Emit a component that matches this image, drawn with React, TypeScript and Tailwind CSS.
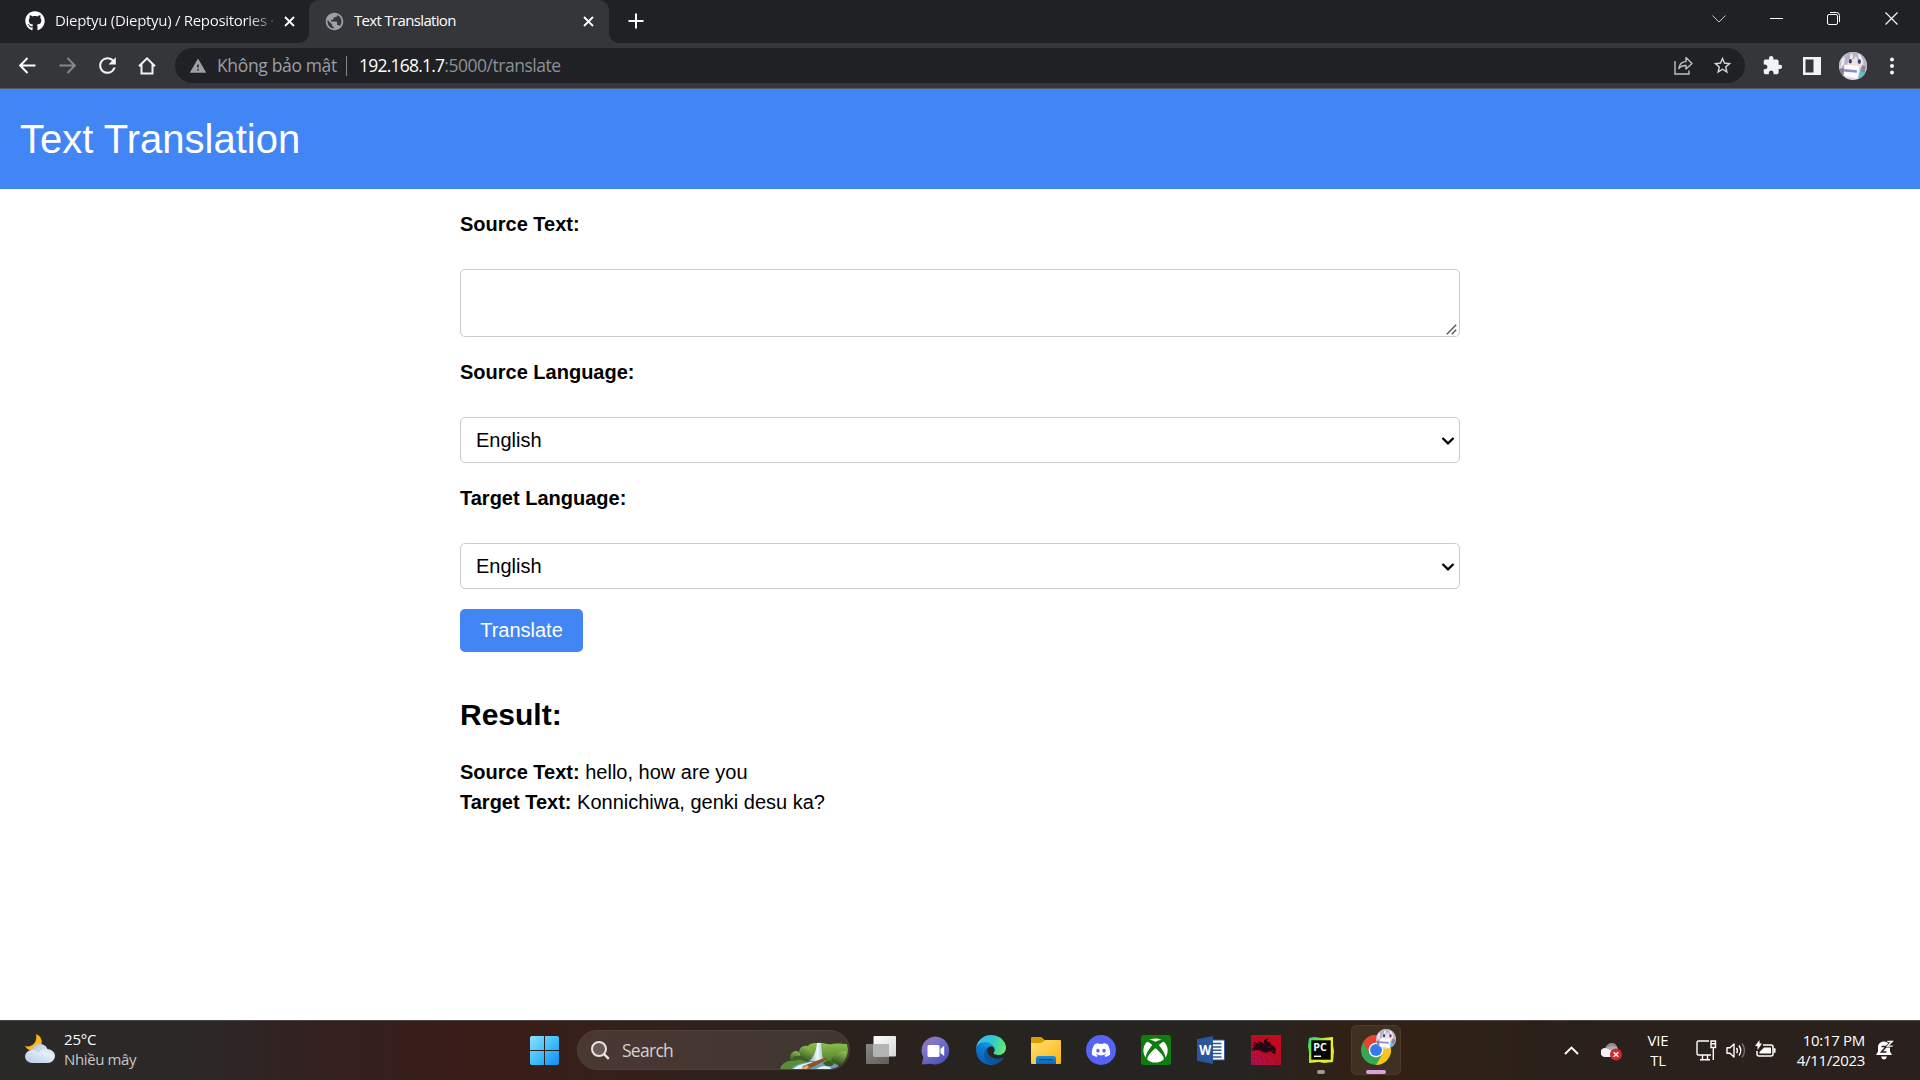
import type { ReactNode } from 'react';
import { FaDiscord, FaGithub, FaXbox } from 'react-icons/fa';
import { MdExtension, MdPublic, MdRefresh, MdStarBorder, MdWarning } from 'react-icons/md';

/* ---------- browser chrome ---------- */

function CloseX({ className = '' }: { className?: string }) {
  return (
    <svg className={`block size-[11px] shrink-0 ${className}`} viewBox="0 0 11 11" fill="none" stroke="#fff" strokeWidth="1.8">
      <path d="M1 1l9 9M10 1l-9 9" />
    </svg>
  );
}

function TabStrip() {
  return (
    <div className="flex h-[43px] bg-[#202124]">
      <div className="flex w-[309px] items-center pb-px pl-[25px]">
        <FaGithub className="size-[20px] shrink-0 text-white" />
        <div className="ml-[10px] w-[220px] whitespace-nowrap bg-gradient-to-r from-white from-88% to-[#4a4b4e] bg-clip-text pb-[3px] text-[15px] leading-[20px] tracking-[-0.3px] text-transparent">
          Dieptyu (Dieptyu) / Repositories ·
        </div>
        <CloseX className="ml-[9px]" />
      </div>
      <div className="relative flex w-[300px] items-center rounded-t-[10px] bg-[#35363a] pb-px pl-[15px]">
        <svg className="absolute -left-[10px] bottom-0 size-[10px]" viewBox="0 0 10 10">
          <path d="M10 0v10H0A10 10 0 0 0 10 0z" fill="#35363a" />
        </svg>
        <svg className="absolute -right-[10px] bottom-0 size-[10px]" viewBox="0 0 10 10">
          <path d="M0 0v10h10A10 10 0 0 1 0 0z" fill="#35363a" />
        </svg>
        <MdPublic className="size-[21px] shrink-0 text-[#9aa0a6]" />
        <div className="ml-[9px] w-[219px] whitespace-nowrap pb-[3px] text-[15px] leading-[20px] tracking-[-0.66px] text-white">
          Text Translation
        </div>
        <CloseX className="ml-[10px]" />
      </div>
      <div className="flex flex-1 items-center pb-px pl-[19px]">
        <svg className="block size-[16px]" viewBox="0 0 16 16" stroke="#fff" strokeWidth="2">
          <path d="M8 0.5v15M0.5 8h15" />
        </svg>
      </div>
      <div className="flex items-start pr-[22px] pt-[12px]">
        <svg className="mt-[3px] block h-[8px] w-[14px]" viewBox="0 0 14 8" fill="none" stroke="#c8c9cb" strokeWidth="1">
          <path d="M.5.5L7 7 13.5.5" />
        </svg>
        <svg className="ml-[44px] mt-[6px] block h-[1px] w-[13px]" viewBox="0 0 13 1">
          <path d="M0 0h13v1H0z" fill="#fff" />
        </svg>
        <svg className="ml-[44px] block size-[13px]" viewBox="0 0 13 13" fill="none" stroke="#fff" strokeWidth="1">
          <rect x=".5" y="2.5" width="10" height="10" rx="1.5" />
          <path d="M3 .5h6.5a3 3 0 0 1 3 3V10" />
        </svg>
        <svg className="ml-[45px] block size-[13px]" viewBox="0 0 13 13" fill="none" stroke="#fff" strokeWidth="1.1">
          <path d="M.5.5l12 12M12.5.5l-12 12" />
        </svg>
      </div>
    </div>
  );
}

function Arrow({ color, className = '' }: { color: string; className?: string }) {
  return (
    <svg className={`block size-[17px] ${className}`} viewBox="0 0 17 17" fill="none" stroke={color} strokeWidth="1.9">
      <path d="M16.5 8.5H1.5M8.5 1L1.2 8.5l7.3 7.5" />
    </svg>
  );
}

function Toolbar() {
  return (
    <div className="flex h-[46px] items-center border-b border-[#55585c] bg-[#35363a] pl-[19px] pr-[25px]">
      <Arrow color="#fff" />
      <Arrow color="#85878a" className="ml-[23px] rotate-180" />
      <MdRefresh className="ml-[19px] size-[25px] text-[#f1f3f4]" />
      <svg className="ml-[18px] block h-[18px] w-[18px]" viewBox="0 0 18 18" fill="none" stroke="#f1f3f4" strokeWidth="2">
        <path d="M1 9.2L9 1.4l8 7.8M3.5 7.5V16.5h11V7.5" />
      </svg>
      <div className="ml-[19px] flex h-[35px] flex-1 items-center rounded-full bg-[#202124] pl-[14px] pr-[12px] text-[17.5px] leading-[24px]">
        <MdWarning className="size-[18px] text-[#9aa0a6]" />
        <span className="ml-[10px] w-[129px] whitespace-nowrap pb-px tracking-[-0.35px] text-[#9aa0a6]">Không bảo mật</span>
        <span className="h-[20px] w-px bg-[#85898e]" />
        <span className="ml-[12px] whitespace-nowrap pb-px tracking-[-0.78px] text-white">192.168.1.7</span>
        <span className="flex-1 whitespace-nowrap pb-px tracking-[-0.47px] text-[#8d9196]">:5000/translate</span>
        <svg className="block size-[19px]" viewBox="0 0 19 19" fill="none" stroke="#bdc1c6" strokeWidth="1.4">
          <path d="M1 5v13h14v-3.5" />
          <path d="M4.8 12.6c.5-4.300 2.900-6.800 7.200-7V1.600L18 7.400l-6 5.600V9.500c-3.300-.1-5.500.9-7.200 3.100z" strokeLinejoin="round" />
        </svg>
        <MdStarBorder className="ml-[19px] size-[21px] text-[#d5d7da]" />
      </div>
      <MdExtension className="ml-[17px] size-[21px] text-[#f1f3f4]" />
      <svg className="ml-[20px] block size-[18px]" viewBox="0 0 18 18">
        <path d="M0 0h18v18H0zM2.500 2.500v13h8v-13z" fill="#f1f3f4" fillRule="evenodd" />
      </svg>
      <Avatar className="ml-[18px] size-[28px]" />
      <svg className="ml-[22px] block h-[18px] w-[6px]" viewBox="0 0 6 18" fill="#f1f3f4">
        <circle cx="3" cy="2.500" r="2" />
        <circle cx="3" cy="9" r="2" />
        <circle cx="3" cy="15.500" r="2" />
      </svg>
    </div>
  );
}

function Avatar({ className = '' }: { className?: string }) {
  return (
    <svg className={`block shrink-0 rounded-full ${className}`} viewBox="0 0 28 28">
      <rect width="28" height="28" fill="#dcd8e4" />
      <path d="M7 5l6-3h8l4 4-2 9H8z" fill="#f3dfdc" />
      <path d="M8 0h15l4 6 1 9-4 1 .5-7-2.500-4-3 3.500L17 4l-3 4-1.500-3L9 8.500 8 15l-6 6-2-9z" fill="#b9b3c6" />
      <path d="M13 1l1 4-3 3 .5-5zM19 1l3 3 1 5-3.500-3z" fill="#f4f2f8" />
      <path d="M3 7l3-2-1 7-4 5z" fill="#eeebf3" />
      <ellipse cx="11.300" cy="9.300" rx="1.600" ry="2.300" fill="#2c4488" />
      <ellipse cx="20.300" cy="9.600" rx="1.600" ry="2.300" fill="#2c4488" />
      <path d="M0 17l5-1 1 9-3 3H0z" fill="#8b7b92" />
      <path d="M19 26l3-11 4 2 2 6-5 5z" fill="#63bfcd" />
      <path d="M23 13l4 2-2 6-3-2z" fill="#9a7f95" />
      <path d="M5.500 12.500l14.500 1.800-1 12.200-14.500-2.500z" fill="#fdfdff" />
      <path d="M5.500 17l12.500 1.200-.2 2.600L4 19.600z" fill="#8f8ccc" />
    </svg>
  );
}

/* ---------- page ---------- */

function SelectBox({ value }: { value: string }) {
  return (
    <div className="mt-[30px] flex h-[46px] items-center justify-between rounded-[5px] border border-[#ccc] pl-[15px] pr-[4px] text-[20px] leading-[30px]">
      <span>{value}</span>
      <svg className="mt-px block h-[10px] w-[14px]" viewBox="0 0 14 10" fill="none" stroke="#000" strokeWidth="2.200">
        <path d="M1.500 2L7 7.400 12.500 2" />
      </svg>
    </div>
  );
}

function Label({ children }: { children: ReactNode }) {
  return <div className="mt-[20px] text-[20px] font-bold leading-[30px]">{children}</div>;
}

function Page() {
  return (
    <div className="flex-1 bg-white font-['Liberation_Sans',Arial,sans-serif] text-black">
      <header className="flex h-[100px] items-center bg-[#4285f4] pl-[20px] text-[40px] leading-[60px] text-white">
        Text Translation
      </header>
      <main className="mx-auto w-[1000px]">
        <Label>Source Text:</Label>
        <div className="mt-[30px] flex h-[68px] items-end justify-end rounded-[5px] border border-[#ccc] pb-px pr-[2px]">
          <svg className="block size-[11px]" viewBox="0 0 11 11" stroke="#555" strokeWidth="1.400">
            <path d="M.8 10.200L10.200.8M5.800 10.200l4.400-4.400" />
          </svg>
        </div>
        <Label>Source Language:</Label>
        <SelectBox value="English" />
        <Label>Target Language:</Label>
        <SelectBox value="English" />
        <button className="mt-[20px] flex h-[43px] w-[123px] items-center justify-center rounded-[5px] bg-[#4285f4] pb-[2px] text-[20px] text-white">
          Translate
        </button>
        <h2 className="mt-[40px] text-[30px] font-bold leading-[45px]">Result:</h2>
        <p className="mt-[20px] text-[20px] leading-[30px]">
          <b>Source Text:</b> hello, how are you
          <br />
          <b>Target Text:</b> Konnichiwa, genki desu ka?
        </p>
      </main>
    </div>
  );
}

/* ---------- taskbar ---------- */

function Weather() {
  return (
    <svg className="block h-[30px] w-[32px]" viewBox="0 0 32 30">
      <defs>
        <linearGradient id="cloud" x1="0" y1="0" x2="1" y2="1">
          <stop offset="0" stopColor="#a9c4ee" />
          <stop offset="1" stopColor="#eef4fc" />
        </linearGradient>
        <linearGradient id="cloudLow" x1="0" y1="1" x2="1" y2="0">
          <stop offset="0" stopColor="#b4c8e8" />
          <stop offset=".7" stopColor="#e6effa" />
          <stop offset="1" stopColor="#c5d6f0" />
        </linearGradient>
      </defs>
      <path d="M12 0c5 2 7 7 5 12-2 6-12 7-16 0 6 2 13-3 11-12z" fill="#fdb813" />
      <circle cx="16" cy="18" r="8" fill="url(#cloud)" />
      <path d="M8 29a7 6.500 0 0 1 0-13c4 0 5 1.500 6.500 3 2-3 5-4 8-4a8 7 0 0 1 1 14z" fill="url(#cloudLow)" />
    </svg>
  );
}

function WindowsLogo() {
  return (
    <svg className="block size-[29px]" viewBox="0 0 29 29">
      <defs>
        <linearGradient id="win" x1="0" y1="0" x2="29" y2="29" gradientUnits="userSpaceOnUse">
          <stop offset="0" stopColor="#8ce0ff" />
          <stop offset=".5" stopColor="#41c0fc" />
          <stop offset="1" stopColor="#0f8df5" />
        </linearGradient>
      </defs>
      <path d="M1.200 0H14v14H0V1.200zM15 0h12.800L29 1.200V14H15zM0 15h14v14H1.200L0 27.800zM15 15h14v12.800L27.800 29H15z" fill="url(#win)" />
    </svg>
  );
}

function Landscape() {
  return (
    <svg className="block h-[27px] w-[68px]" viewBox="0 0 68 27">
      <defs>
        <linearGradient id="hill" x1="0" y1="0" x2="0" y2="1">
          <stop offset="0" stopColor="#8dbf4c" />
          <stop offset="1" stopColor="#44752b" />
        </linearGradient>
        <linearGradient id="bush" x1=".8" y1="0" x2=".4" y2="1">
          <stop offset="0" stopColor="#93c153" />
          <stop offset="1" stopColor="#2c4f1e" />
        </linearGradient>
        <linearGradient id="fall" x1="0" y1="0" x2="1" y2="0">
          <stop offset="0" stopColor="#7fa9bd" />
          <stop offset=".5" stopColor="#f0f9fc" />
          <stop offset="1" stopColor="#7fa9bd" />
        </linearGradient>
      </defs>
      <path d="M19 10c1-5 4-7 9-6 2-3 6-3 9-3 6-1 10 2 15 1 6-1 11 0 15 0l1 4v8L58 23H20z" fill="url(#hill)" />
      <path d="M19 17c-1-8 3-12 7-12 5 0 9 5 7 12-3 4-10 4-14 0z" fill="url(#bush)" />
      <path d="M10 19c-1-6 2-10 6-10 3 0 5 4 5 8-1 4-7 6-11 2z" fill="url(#bush)" />
      <path d="M13 18c-1-3 2-5 6-4 4-1 5 2 4 4-3 2-7 2-10 0z" fill="#39632a" />
      <path d="M66 9c-7 0-13 4-15 9 3 4 8 5 11 4 3-3 5-8 4-13z" fill="url(#bush)" />
      <path d="M37 1h4l1.500 14 3.500 4H29c5-4 7-10 8-18z" fill="url(#fall)" />
      <path d="M0 27c2-6 7-9 14-8 5-2 10-1 13 1l-5 7z" fill="#5d8c38" />
      <path d="M11 27c6-6 14-7 24-8 10-1 17 1 24 5l-4 3z" fill="#6c9fb0" />
      <path d="M14 26c5-4 11-4 16-6l5 .5-9 4.500-5 2h-8zM40 25c5-2 9-1 12 2H36z" fill="#dceff5" />
      <path d="M23 24l8-3 13-5 4 1-13 7-7 3h-6z" fill="#8f532a" />
      <path d="M22 25.500l5-2.500 2 2-2 2h-5z" fill="#dca874" />
      <path d="M43 21c4-3 8-2 11 0l-2 3h-6z" fill="#3c5a25" />
    </svg>
  );
}

function TaskView() {
  return (
    <svg className="block h-[28px] w-[30px]" viewBox="0 0 30 28">
      <defs>
        <linearGradient id="tvBack" x1="0" y1="0" x2="1" y2="1">
          <stop offset="0" stopColor="#fff" />
          <stop offset="1" stopColor="#d6d6d6" />
        </linearGradient>
        <linearGradient id="tvFront" x1="0" y1="0" x2="1" y2="1">
          <stop offset="0" stopColor="#888" />
          <stop offset="1" stopColor="#5c5c5c" />
        </linearGradient>
      </defs>
      <rect x="0" y="8" width="23" height="20" rx="1" fill="url(#tvFront)" />
      <rect x="7.500" y="0" width="22.500" height="20.500" rx="1" fill="url(#tvBack)" />
      <path d="M7.500 8H23v12.500H7.500z" fill="#b4b4b4" />
    </svg>
  );
}

function Chat() {
  return (
    <svg className="block size-[29px]" viewBox="0 0 29 29">
      <defs>
        <linearGradient id="chat" x1="0" y1="0" x2=".8" y2="1">
          <stop offset="0" stopColor="#a06ba8" />
          <stop offset=".35" stopColor="#7d77c9" />
          <stop offset="1" stopColor="#4b4bbd" />
        </linearGradient>
      </defs>
      <path d="M14.500.5a14 14 0 1 1-5 27.200L.8 28.500l1.600-7A14 14 0 0 1 14.500.5z" fill="url(#chat)" />
      <rect x="6.500" y="9" width="12" height="12" rx="1.500" fill="#fff" />
      <path d="M19.500 13l3.700-3.200V20L19.500 17z" fill="#fff" />
    </svg>
  );
}

function Edge() {
  return (
    <svg className="block size-[30px]" viewBox="0 0 256 256">
      <defs>
        <linearGradient id="edgeDark" x1="63" y1="177" x2="241" y2="177" gradientUnits="userSpaceOnUse">
          <stop offset="0" stopColor="#0c59a4" />
          <stop offset="1" stopColor="#114a8b" />
        </linearGradient>
        <linearGradient id="edgeBlue" x1="157" y1="100" x2="46" y2="221" gradientUnits="userSpaceOnUse">
          <stop offset="0" stopColor="#1b9de2" />
          <stop offset=".5" stopColor="#0a7ad2" />
          <stop offset="1" stopColor="#0a62b8" />
        </linearGradient>
        <linearGradient id="edgeTop" x1="10" y1="60" x2="250" y2="110" gradientUnits="userSpaceOnUse">
          <stop offset="0" stopColor="#35c1f1" />
          <stop offset=".5" stopColor="#2fc6cf" />
          <stop offset="1" stopColor="#66eb6e" />
        </linearGradient>
      </defs>
      <path d="M231 190.500a93.700 93.700 0 0 1-10.500 4.700 101.900 101.900 0 0 1-35.900 6.500c-47.300 0-88.500-32.500-88.500-74.300a31.500 31.500 0 0 1 16.400-27.300c-42.800 1.800-53.800 46.400-53.800 72.500 0 73.900 68.100 81.400 82.800 81.400 7.900 0 19.800-2.300 27-4.600l1.300-.4a128.300 128.300 0 0 0 66.600-52.800 4 4 0 0 0-5.400-5.700z" fill="url(#edgeDark)" />
      <path d="M105.700 241.400A79.200 79.200 0 0 1 83 220.100a80.700 80.700 0 0 1 29.500-120c3.200-1.500 8.500-4.100 15.600-4a32.400 32.400 0 0 1 25.700 13 31.900 31.900 0 0 1 6.300 18.700c0-.2 24.500-79.600-80-79.600-43.900 0-80 41.700-80 78.200a130.200 130.200 0 0 0 12.100 56 128 128 0 0 0 156.400 67 75.500 75.500 0 0 1-62.900-8z" fill="url(#edgeBlue)" />
      <path d="M152.300 148.900c-.8 1-3.300 2.500-3.300 5.700 0 2.600 1.700 5.100 4.700 7.200 14.400 10 41.500 8.700 41.600 8.700a59.600 59.600 0 0 0 30.300-8.300A61.400 61.400 0 0 0 256 109.200c.3-22.400-8-37.300-11.300-43.900C223.500 23.900 177.700 0 128 0A128 128 0 0 0 0 126.200c.5-36.500 36.800-66 80-66 3.500 0 23.500.3 42 10a72.600 72.600 0 0 1 30.900 29.300c6.100 10.600 7.200 24.100 7.200 29.500s-2.700 13.300-7.800 19.900z" fill="url(#edgeTop)" />
    </svg>
  );
}

function Folder() {
  return (
    <svg className="block h-[27px] w-[30px]" viewBox="0 0 30 27">
      <defs>
        <linearGradient id="folder" x1="0" y1="0" x2="1" y2="1">
          <stop offset="0" stopColor="#ffdf73" />
          <stop offset="1" stopColor="#fdb60d" />
        </linearGradient>
        <linearGradient id="folderDock" x1="0" y1="0" x2="0" y2="1">
          <stop offset="0" stopColor="#1b8fdc" />
          <stop offset="1" stopColor="#0f66b8" />
        </linearGradient>
      </defs>
      <path d="M0 1q0-1 1-1h8.500q1 0 1.700.7L14 3.500h4V8H0z" fill="#dc9a04" />
      <path d="M0 6h9.500q1.200 0 2-.8l1.500-1.500Q13.600 3 15 3h14q1 0 1 1v22q0 1-1 1H1q-1 0-1-1z" fill="url(#folder)" />
      <path d="M5 27v-5.500Q5 19 7.500 19h15q2.500 0 2.500 2.500V27z" fill="url(#folderDock)" />
      <path d="M8 22.700h13.500" stroke="#0a4a8a" strokeWidth="1.200" />
    </svg>
  );
}

function Word() {
  return (
    <svg className="block h-[28px] w-[28px]" viewBox="0 0 28 28">
      <path d="M14 4h13q.6 0 .6.6v18.800q0 .6-.6.6H14z" fill="#fff" stroke="#2b579a" strokeWidth="1" />
      <path d="M16 7.500h8.500M16 11h8.500M16 14.300h8.500M16 17.600h8.500M16 21h8.500" stroke="#2b579a" strokeWidth="1.500" />
      <path d="M0 3.200L16 0v28L0 24.800z" fill="#2b579a" />
      <text x="8.200" y="19.200" textAnchor="middle" fill="#fff" fontSize="14" fontWeight="700" fontFamily="Open Sans, sans-serif" textLength="12" lengthAdjust="spacingAndGlyphs">
        W
      </text>
    </svg>
  );
}

function Dragon() {
  return (
    <svg className="block size-[30px]" viewBox="0 0 30 30">
      <defs>
        <linearGradient id="dragonBg" x1=".8" y1="0" x2=".2" y2="1">
          <stop offset="0" stopColor="#c90a1c" />
          <stop offset=".6" stopColor="#b00d26" />
          <stop offset="1" stopColor="#a3104a" />
        </linearGradient>
      </defs>
      <rect width="30" height="30" fill="url(#dragonBg)" />
      <path d="M0 9.500l5 1L2 7l7 2L6 5.500l7 3C12 5.500 14 4 18 3L15.500 6l4.500 2-1 1.200 4 2 2 3-.8 2 .3 3-2.500-1-2.500-2-3 .3.500 1.500-4-.8-4-2L5 15l-5 1 3-2.500-3 .2 4-2z" fill="#1d0a12" />
      <path d="M17 11.500l3 .8M20 15.500l3 .5" stroke="#a30d22" strokeWidth=".7" />
      <path d="M0 18.500c5-2 9-1 12 3 1.500 2 2 5 2 8.500M0 21.500c5-1 9 1 10 8.500M0 25c4 0 6 2 6 5M15 20c4 2 6 5 7 10" stroke="#d3154f" strokeWidth=".7" fill="none" />
    </svg>
  );
}

function PyCharm() {
  return (
    <svg className="block size-[26px]" viewBox="0 0 26 26">
      <defs>
        <linearGradient id="pc" x1="0" y1="0" x2="1" y2=".7">
          <stop offset="0" stopColor="#21d789" />
          <stop offset=".3" stopColor="#62e04c" />
          <stop offset=".6" stopColor="#f0ec2c" />
          <stop offset="1" stopColor="#d9ea30" />
        </linearGradient>
      </defs>
      <path d="M1 1l5-1 8 1 11-1v8l1 6-1 11-9 1-5-1-10 1V15L0 9z" fill="url(#pc)" />
      <rect x="3.300" y="3.300" width="19.400" height="19.400" fill="#050705" />
      <text x="12" y="14" textAnchor="middle" fill="#fff" fontSize="10" fontWeight="700" fontFamily="Open Sans, sans-serif" textLength="13.500" lengthAdjust="spacingAndGlyphs">
        PC
      </text>
      <path d="M6 19.300h7" stroke="#fff" strokeWidth="1.400" />
    </svg>
  );
}

function Chrome() {
  return (
    <svg className="block size-[30px]" viewBox="0 0 48 48">
      <circle cx="24" cy="24" r="24" fill="#34a853" />
      <path d="M24 12h20.800A24 24 0 0 1 24 48l10.400-18z" fill="#fcc419" />
      <path d="M3.200 12A24 24 0 0 1 44.800 12H24l-10.400 18z" fill="#ea4335" />
      <circle cx="24" cy="24" r="11.800" fill="#fff" />
      <circle cx="24" cy="24" r="9.500" fill="#2f7de9" />
    </svg>
  );
}

function Slot({ children }: { children: ReactNode }) {
  return <div className="flex w-[55px] shrink-0 items-center justify-center">{children}</div>;
}

function Tray() {
  return (
    <div className="flex items-center pb-px text-[15px] leading-[20px] text-white">
      <svg className="block h-[9px] w-[15px]" viewBox="0 0 15 9" fill="none" stroke="#fff" strokeWidth="1.900">
        <path d="M1 8l6.500-6.500L14 8" />
      </svg>
      <svg className="ml-[22px] mt-[4px] block h-[18px] w-[21px]" viewBox="0 0 21 18">
        <path d="M4 6C5 1 9 0 11 0c3 0 5 2 5.500 5l-8 4z" fill="#8d8b89" />
        <path d="M4 14a4.500 4.500 0 0 1 0-9c3 0 5 2 7 3l-1 6z" fill="#f3f3f3" />
        <path d="M4 5c3 0 5 2 7 3l6-2-1-2-5-1z" fill="#aeacab" />
        <circle cx="15" cy="11.500" r="6" fill="#d7262b" />
        <path d="M12.700 9.200l4.600 4.600M17.300 9.200l-4.600 4.600" stroke="#fff" strokeWidth="1.500" />
      </svg>
      <div className="ml-[16px] w-[40px] text-center tracking-[-0.2px]">
        <div>VIE</div>
        <div>TL</div>
      </div>
      <svg className="ml-[18px] block h-[21px] w-[21px]" viewBox="0 0 21 21" fill="none" stroke="#fff" strokeWidth="1.400">
        <path d="M13 1H2.500Q1 1 1 2.500v11Q1 15 2.500 15H15M6.500 15v4.500M11.500 15v4.500M4 19.800h10" />
        <path d="M15 1h4.500v6.500h-4.500zM17.300 7.500V20M15 3.800h4.500" />
      </svg>
      <svg className="ml-[9px] block h-[17px] w-[21px]" viewBox="0 0 21 17" fill="none" stroke="#fff" strokeWidth="1.400">
        <path d="M1 5.800h3L8 2v13l-4-3.800H1z" strokeLinejoin="round" />
        <path d="M10.500 5.800q1.800 2.700 0 5.400M13 3.500q3.500 5 0 10" />
        <path d="M16 1.500q5 7 0 14" stroke="#77706c" />
      </svg>
      <svg className="-mt-[2px] ml-[8px] block h-[18px] w-[21px]" viewBox="0 0 21 18">
        <path d="M8 5h8q2 0 2 2v7q0 2-2 2H4q-2 0-2-2v-3" fill="none" stroke="#fff" strokeWidth="1.500" />
        <path d="M9 7.500h7v6H4.500V12z" fill="#fff" />
        <path d="M19 8.500h1.200v4H19z" fill="#fff" stroke="#fff" strokeWidth=".6" />
        <path d="M4.500 0v3.500H7L2.500 10V6H0z" fill="#fff" />
      </svg>
      <div className="ml-[17px] w-[72px] text-right tracking-[-0.31px]">
        <div>10:17 PM</div>
        <div>4/11/2023</div>
      </div>
      <svg className="ml-[11px] block h-[20px] w-[18px]" viewBox="0 0 18 20">
        <path d="M0 15l2-3.500V7.500C2 4 4.500 1.500 8 1.500s6 3 6 6v4l2 3.500z" fill="#fff" />
        <path d="M5 16.500h6q-1 3-3 3t-3-3z" fill="#fff" />
        <path d="M5.500 6.500h4.700l-4.700 5.500h4.900" fill="none" stroke="#2a201d" strokeWidth="1.500" />
        <path d="M10.800 1.200h5.500l-4.800 5h5" fill="none" stroke="#2a201d" strokeWidth="2.800" />
        <path d="M11.300 1.500h4.900l-4.600 4.600h5" fill="none" stroke="#fff" strokeWidth="1.400" />
      </svg>
    </div>
  );
}

function Taskbar() {
  return (
    <div className="flex h-[60px] justify-between border-t border-[#484642] bg-[linear-gradient(90deg,#2a2a29_0,#2b2928_180px,#332120_320px,#3b1c18_490px,#36201b_600px,#2c211c_760px,#2a221d_900px,#252421_1060px,#262422_1240px,#332012_1380px,#2d2117_1480px,#2a201c_1600px,#2a201d_1920px)] pr-[26px]">
      <div className="flex w-[517px] items-center pb-[3px] pl-[24px]">
        <Weather />
        <div className="ml-[8px] text-[15px] leading-[20px]">
          <div className="tracking-[-0.2px] text-white">25°C</div>
          <div className="tracking-[-0.37px] text-[#c9c7c5]">Nhiều mây</div>
        </div>
      </div>
      <div className="flex flex-1 pb-px">
        <Slot>
          <WindowsLogo />
        </Slot>
        <div className="ml-[5px] mr-[3px] mt-[9px] flex h-[40px] w-[273px] items-center rounded-full border border-[#4f403c] bg-[linear-gradient(90deg,#4a3733,#403630)] pl-[13px]">
          <svg className="block size-[19px]" viewBox="0 0 19 19" fill="none" stroke="#e8e4e2" strokeWidth="2">
            <circle cx="8" cy="8" r="7" fill="#6b5b58" />
            <path d="M12.800 12.800l5 5" strokeWidth="2.400" />
          </svg>
          <span className="ml-[12px] flex-1 text-[17.5px] leading-[24px] tracking-[-0.73px] text-[#d6d1ce]">Search</span>
          <div className="mr-px flex h-[38px] items-end overflow-hidden rounded-r-full">
            <Landscape />
          </div>
        </div>
        <Slot>
          <TaskView />
        </Slot>
        <Slot>
          <Chat />
        </Slot>
        <Slot>
          <Edge />
        </Slot>
        <Slot>
          <Folder />
        </Slot>
        <Slot>
          <div className="flex size-[30px] items-center justify-center rounded-full bg-[#5663f7]">
            <FaDiscord className="size-[20px] text-white" />
          </div>
        </Slot>
        <Slot>
          <div className="flex size-[30px] items-center justify-center rounded-[3px] bg-[#107c10]">
            <FaXbox className="size-[25px] text-white" />
          </div>
        </Slot>
        <Slot>
          <Word />
        </Slot>
        <Slot>
          <Dragon />
        </Slot>
        <Slot>
          <div className="relative">
            <PyCharm />
            <span className="absolute -bottom-[11px] left-[9px] h-[4px] w-[8px] rounded-full bg-[#9d9893]" />
          </div>
        </Slot>
        <Slot>
          <div className="relative flex size-[50px] items-center justify-center rounded-[5px] border border-[#493a2c] bg-[#3f3022]">
            <Chrome />
            <Avatar className="absolute right-[4px] top-[3px] size-[20px]" />
            <span className="absolute bottom-0 left-[14px] h-[4px] w-[20px] rounded-full bg-[#d9a0e2]" />
          </div>
        </Slot>
      </div>
      <Tray />
    </div>
  );
}

export default function App() {
  return (
    <div className="flex h-[1080px] w-[1920px] flex-col overflow-hidden font-['Open_Sans','Noto_Sans',sans-serif]">
      <TabStrip />
      <Toolbar />
      <Page />
      <Taskbar />
    </div>
  );
}
